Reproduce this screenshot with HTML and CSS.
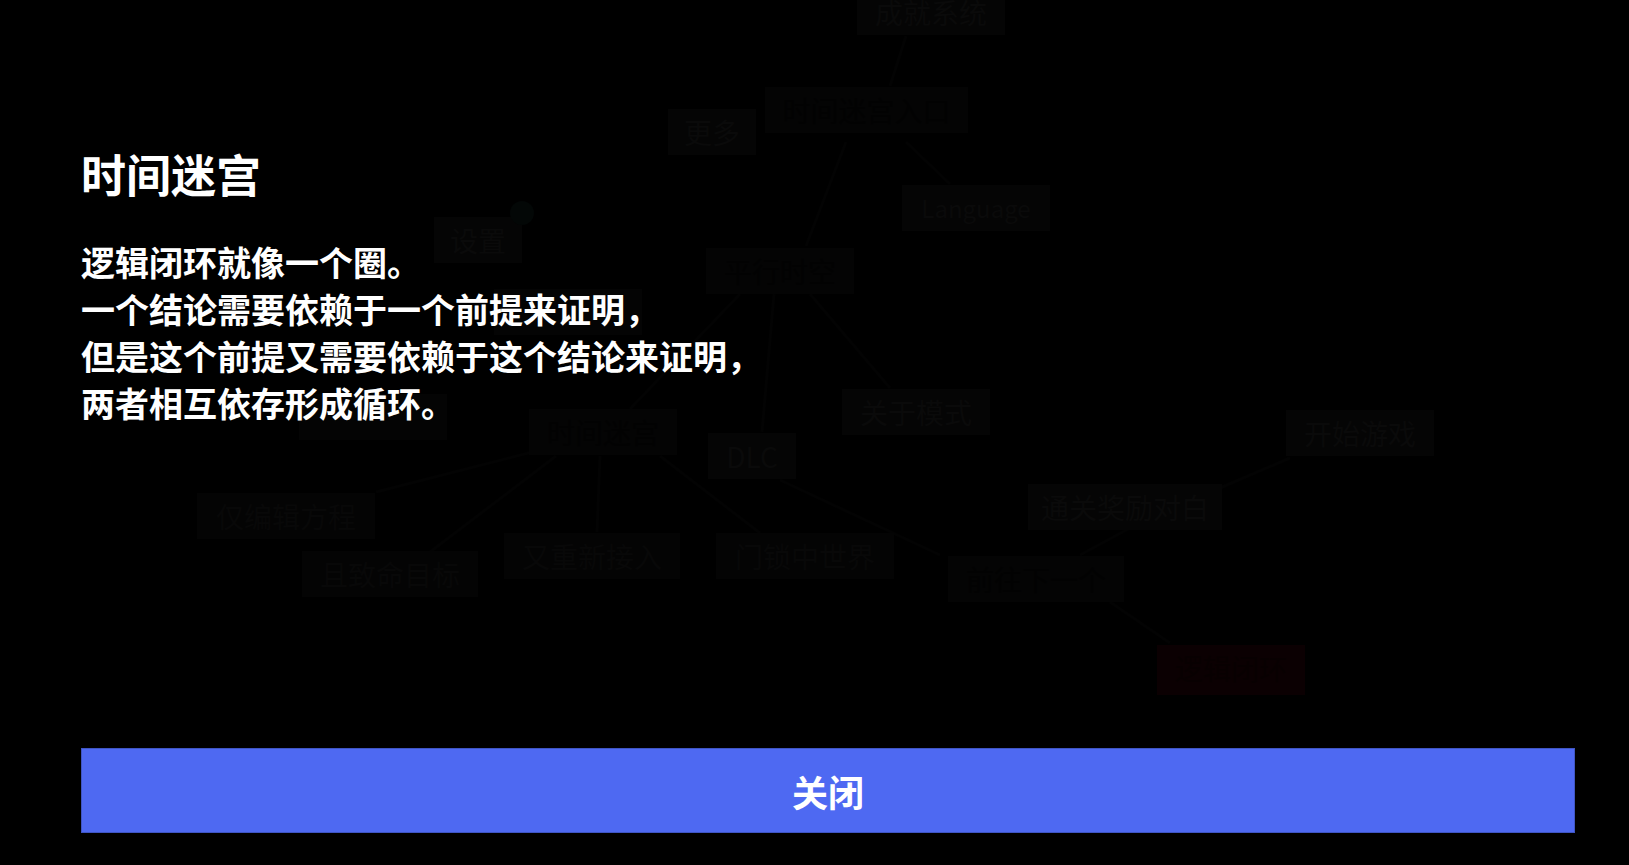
FILE: index.html
```html
<!DOCTYPE html>
<html lang="zh-CN">
<head>
    <meta charset="UTF-8">
    <meta name="viewport" content="width=device-width, initial-scale=1.0">
    <title>时间迷宫</title>
    <link rel="stylesheet" href="styles.css">
</head>
<body>
    <!-- Level map behind the dialog -->
    <div class="map" aria-hidden="true">
        <svg class="links" width="1629" height="865">
            <path d="M906 36L890 86M846 142L806 246M906 142L950 184M774 294L762 432M810 294L890 388M740 294L630 409M540 450L376 492M556 456L430 552M600 456L597 532M660 456L760 533M780 480L940 555M1290 458L1220 488M1130 528L1080 555M1110 602L1170 643"/>
        </svg>
        <div class="node n-achieve">成就系统</div>
        <div class="node dark n-maze">时间迷宫入口</div>
        <div class="node n-more">更多</div>
        <div class="node n-lang">Language</div>
        <div class="node dark n-mode">平行时空</div>
        <div class="node n-set">设置<span class="dot"></span></div>
        <div class="node dark n-back"></div>
        <div class="node dark n-load"></div>
        <div class="node dark n-loop">时间迷宫</div>
        <div class="node n-dlc">DLC</div>
        <div class="node n-about">关于模式</div>
        <div class="node n-start">开始游戏</div>
        <div class="node n-clear">通关奖励对白</div>
        <div class="node dim n-editor">仅编辑方程</div>
        <div class="node dim n-target">且致命目标</div>
        <div class="node dim n-enter">又重新接入</div>
        <div class="node dim n-world">门锁中世界</div>
        <div class="node dark n-next">前往下一个</div>
        <div class="node red n-end">逻辑闭环</div>
    </div>

    <main class="dialog">
        <div class="content">
            <h1>时间迷宫</h1>
            <p>逻辑闭环就像一个圈。<br>
            一个结论需要依赖于一个前提来证明，<br>
            但是这个前提又需要依赖于这个结论来证明，<br>
            两者相互依存形成循环。</p>
        </div>
        <button type="button" class="close">关闭</button>
    </main>
</body>
</html>
```
FILE: styles.css
```css
* {
    box-sizing: border-box;
}

body {
    margin: 0;
    background-color: #000;
    color: #fff;
    font-family: "Noto Sans CJK SC", sans-serif;
}

/* Dialog */
.dialog {
    position: relative;
    display: flex;
    flex-direction: column;
    justify-content: space-between;
    min-height: 100vh;
    padding: 144px 54px 32px 81px;
}

h1 {
    margin: 0 0 34px;
    font-size: 45px;
    line-height: 60px;
    font-weight: 700;
}

p {
    margin: 0;
    font-size: 34px;
    line-height: 47px;
    font-weight: 700;
}

.close {
    width: 100%;
    height: 85px;
    border: 1px solid #3f55c4;
    background-color: #4e69f2;
    color: #fff;
    font-family: inherit;
    font-size: 36px;
    font-weight: 700;
    cursor: pointer;
}

/* Map */
.map {
    position: absolute;
    inset: 0;
    overflow: hidden;
}

.links {
    position: absolute;
    left: 0;
    top: 0;
    fill: none;
    stroke: #030303;
    stroke-width: 3;
}

.node {
    position: absolute;
    width: 148px;
    height: 46px;
    background-color: #050505;
    color: #0a0a0a;
    font-size: 28px;
    line-height: 46px;
    text-align: center;
    white-space: nowrap;
}

.dim {
    background-color: #040404;
    color: #080808;
}

.dark {
    background-color: #040404;
    color: #020202;
}

.red {
    background-color: #0b0002;
    color: #080001;
}

.dot {
    position: absolute;
    right: -12px;
    top: -16px;
    width: 24px;
    height: 24px;
    border-radius: 50%;
    background-color: #030706;
}

.n-achieve { left: 857px; top: -11px; }
.n-maze { left: 765px; top: 87px; width: 203px; }
.n-more { left: 668px; top: 109px; width: 88px; }
.n-lang { left: 902px; top: 185px; font-size: 24px; }
.n-mode { left: 706px; top: 248px; }
.n-set { left: 434px; top: 217px; width: 88px; }
.n-back { left: 494px; top: 289px; }
.n-load { left: 299px; top: 394px; }
.n-loop { left: 529px; top: 409px; }
.n-dlc { left: 708px; top: 433px; width: 88px; }
.n-about { left: 842px; top: 389px; }
.n-start { left: 1286px; top: 410px; }
.n-clear { left: 1028px; top: 484px; width: 194px; }
.n-editor { left: 197px; top: 493px; width: 178px; }
.n-target { left: 302px; top: 551px; width: 176px; }
.n-enter { left: 504px; top: 533px; width: 176px; }
.n-world { left: 716px; top: 533px; width: 178px; }
.n-next { left: 948px; top: 556px; width: 176px; }
.n-end { left: 1157px; top: 645px; height: 50px; }
```
